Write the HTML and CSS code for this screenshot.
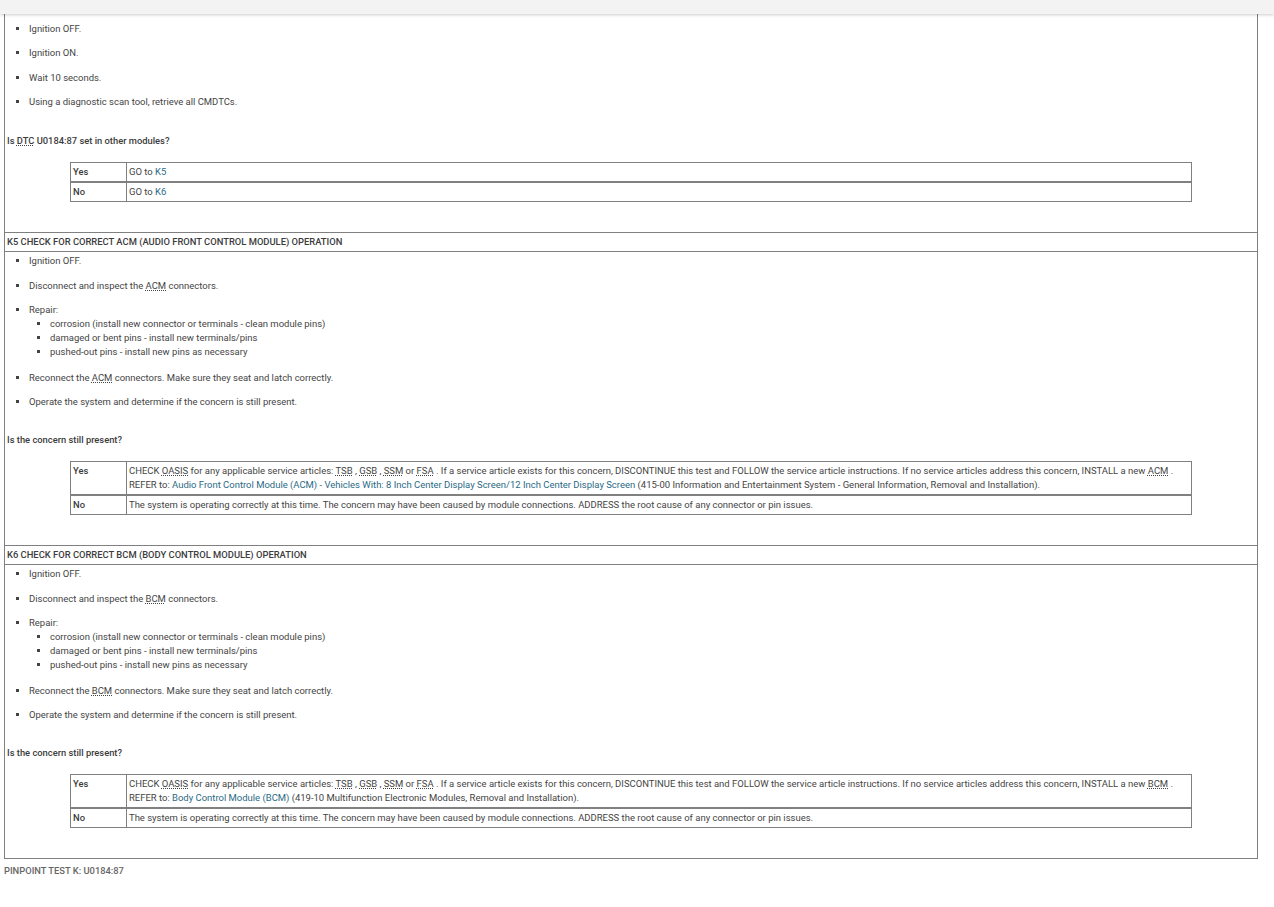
FILE: index.html
```
<!DOCTYPE html>
<html lang="en">
<head>
<meta charset="utf-8">
<title>Pinpoint Test K: U0184:87</title>
<link rel="stylesheet" href="styles.css">
</head>
<body>
<header class="topbar"></header>
<main class="test">
  <section class="step step-first">
    <ul class="steps">
      <li>Ignition OFF.</li>
      <li>Ignition ON.</li>
      <li>Wait 10 seconds.</li>
      <li>Using a diagnostic scan tool, retrieve all CMDTCs.</li>
    </ul>
    <p class="question">Is <abbr>DTC</abbr> U0184:87 set in other modules?</p>
    <table class="answers">
      <tr><th>Yes</th><td>GO to <a href="#k5">K5</a></td></tr>
      <tr><th>No</th><td>GO to <a href="#k6">K6</a></td></tr>
    </table>
  </section>
  <section class="step" id="k5">
    <h2 class="step-title">K5 CHECK FOR CORRECT ACM (AUDIO FRONT CONTROL MODULE) OPERATION</h2>
    <ul class="steps">
      <li>Ignition OFF.</li>
      <li>Disconnect and inspect the <abbr>ACM</abbr> connectors.</li>
      <li>Repair:
        <ul class="substeps">
          <li>corrosion (install new connector or terminals - clean module pins)</li>
          <li>damaged or bent pins - install new terminals/pins</li>
          <li>pushed-out pins - install new pins as necessary</li>
        </ul>
      </li>
      <li>Reconnect the <abbr>ACM</abbr> connectors. Make sure they seat and latch correctly.</li>
      <li>Operate the system and determine if the concern is still present.</li>
    </ul>
    <p class="question">Is the concern still present?</p>
    <table class="answers">
      <tr><th>Yes</th><td>CHECK <abbr>OASIS</abbr> for any applicable service articles: <abbr>TSB</abbr> , <abbr>GSB</abbr> , <abbr>SSM</abbr> or <abbr>FSA</abbr> . If a service article exists for this concern, DISCONTINUE this test and FOLLOW the service article instructions. If no service articles address this concern, INSTALL a new <abbr>ACM</abbr> .<br>REFER to: <a href="#acm">Audio Front Control Module (ACM) - Vehicles With: 8 Inch Center Display Screen/12 Inch Center Display Screen</a> (415-00 Information and Entertainment System - General Information, Removal and Installation).</td></tr>
      <tr><th>No</th><td>The system is operating correctly at this time. The concern may have been caused by module connections. ADDRESS the root cause of any connector or pin issues.</td></tr>
    </table>
  </section>
  <section class="step" id="k6">
    <h2 class="step-title">K6 CHECK FOR CORRECT BCM (BODY CONTROL MODULE) OPERATION</h2>
    <ul class="steps">
      <li>Ignition OFF.</li>
      <li>Disconnect and inspect the <abbr>BCM</abbr> connectors.</li>
      <li>Repair:
        <ul class="substeps">
          <li>corrosion (install new connector or terminals - clean module pins)</li>
          <li>damaged or bent pins - install new terminals/pins</li>
          <li>pushed-out pins - install new pins as necessary</li>
        </ul>
      </li>
      <li>Reconnect the <abbr>BCM</abbr> connectors. Make sure they seat and latch correctly.</li>
      <li>Operate the system and determine if the concern is still present.</li>
    </ul>
    <p class="question">Is the concern still present?</p>
    <table class="answers">
      <tr><th>Yes</th><td>CHECK <abbr>OASIS</abbr> for any applicable service articles: <abbr>TSB</abbr> , <abbr>GSB</abbr> , <abbr>SSM</abbr> or <abbr>FSA</abbr> . If a service article exists for this concern, DISCONTINUE this test and FOLLOW the service article instructions. If no service articles address this concern, INSTALL a new <abbr>BCM</abbr> .<br>REFER to: <a href="#bcm">Body Control Module (BCM)</a> (419-10 Multifunction Electronic Modules, Removal and Installation).</td></tr>
      <tr><th>No</th><td>The system is operating correctly at this time. The concern may have been caused by module connections. ADDRESS the root cause of any connector or pin issues.</td></tr>
    </table>
  </section>
</main>
<footer class="caption">PINPOINT TEST K: U0184:87</footer>
</body>
</html>
```
FILE: styles.css
```
html, body {
  margin: 0;
  height: 100%;
  overflow: hidden;
  background: #fff;
}
body {
  font-family: Roboto, "Liberation Sans", sans-serif;
  font-size: 9.47px;
  line-height: 14px;
  color: #444;
}
.topbar {
  height: 14px;
  background: #f3f3f3;
  box-shadow: 0 1px 3px rgba(0, 0, 0, 0.2);
  position: relative;
}
.test {
  width: 1252px;
  margin-left: 4px;
  border: 1px solid #808080;
  border-top: 0;
}
.step {
  padding-bottom: 30px;
}
.step-title {
  margin: 0;
  height: 20px;
  padding-left: 2px;
  box-sizing: border-box;
  font-size: 9.38px;
  font-weight: 500;
  line-height: 18px;
  color: #3c3c3c;
  border-top: 1px solid #808080;
  border-bottom: 1px solid #808080;
}
.steps {
  margin: 0;
  padding: 2px 0 0 24px;
  list-style: square;
}
.step-first .steps {
  padding-top: 8px;
}
.steps > li {
  margin-bottom: 10.4px;
}
.substeps {
  margin: 0;
  padding: 0 0 1.3px 21px;
  list-style: square;
}
.question {
  margin: 24.1px 0 0 2px;
  font-size: 9.35px;
  font-weight: 500;
  color: #3c3c3c;
}
.step-first .question {
  margin-top: 25px;
}
.answers {
  margin: 14px 0 0 65px;
  width: 1122px;
  border-collapse: separate;
  border-spacing: 0;
}
.answers th, .answers td {
  padding: 2px;
  border: 1px solid #808080;
  vertical-align: top;
  text-align: left;
}
.answers th {
  width: 51px;
  font-size: 9.35px;
  font-weight: 500;
  color: #3c3c3c;
  border-right: 0;
}
a {
  color: #2a6a85;
  text-decoration: none;
}
abbr {
  text-decoration: underline dotted;
  text-underline-offset: 1px;
}
.caption {
  margin: 4.8px 0 0 4px;
  font-size: 9.35px;
  font-weight: 500;
  color: #666;
}
```
